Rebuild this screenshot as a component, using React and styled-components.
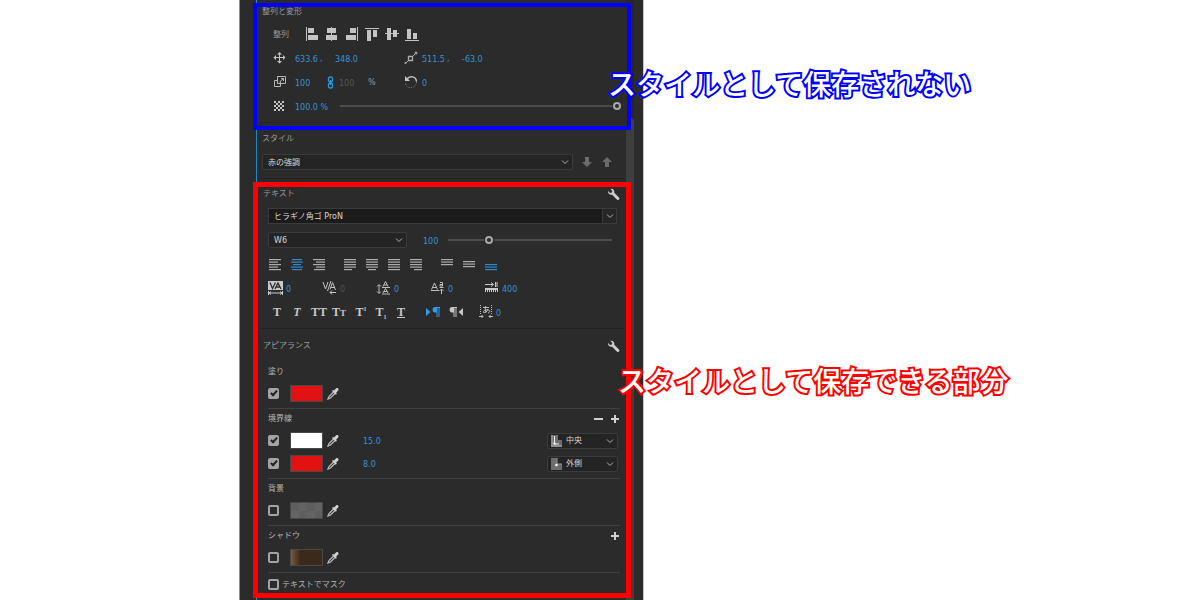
import styled, { createGlobalStyle, css } from "styled-components";

const ALIGN_ICONS = [
  { label: "左揃え", d: "M1 0h1v14H1zM3 1h6v5H3zM3 8h10v5H3z" },
  { label: "水平中央", d: "M6 0h1v14H6zM2 1h9v5H2zM1 8h11v5H1z" },
  { label: "右揃え", d: "M12 0h1v14h-1zM5 1h6v5H5zM1 8h10v5H1z" },
  { label: "上揃え", d: "M0 1h14v1H0zM2 3h4v11H2zM8 3h4v7H8z" },
  { label: "垂直中央", d: "M0 6h14v1H0zM2 1h4v12H2zM8 3h4v7H8z" },
  { label: "下揃え", d: "M0 13h14v1H0zM2 2h4v10H2zM8 6h4v6H8z" },
];

// each entry is [x, width] for the five lines of a paragraph icon
const FULL = [0, 12];
const PARAGRAPH_GROUPS = [
  [
    { label: "左揃え", lines: [FULL, [0, 9], FULL, [0, 9], FULL] },
    { label: "中央揃え", active: true, lines: [[1, 10], FULL, [2, 8], FULL, [1, 10]] },
    { label: "右揃え", lines: [FULL, [3, 9], FULL, [3, 9], [1, 11]] },
  ],
  [
    { label: "均等配置 左", lines: [FULL, FULL, FULL, FULL, [0, 8]] },
    { label: "均等配置 中央", lines: [FULL, FULL, FULL, FULL, [2, 8]] },
    { label: "両端揃え", lines: [FULL, FULL, FULL, FULL, FULL] },
    { label: "均等配置 右", lines: [FULL, FULL, FULL, FULL, [4, 8]] },
  ],
  [
    { label: "テキストを上揃え", lines: [FULL, FULL, FULL] },
    { label: "テキストを垂直中央", offset: 2, lines: [FULL, FULL, FULL] },
    { label: "テキストを下揃え", offset: 5, active: true, lines: [FULL, FULL, FULL] },
  ],
];

const STROKES = [
  { color: "#fff", width: "15.0", position: "中央" },
  { color: "#e31212", width: "8.0", position: "外側" },
];

export default function App() {
  return (
    <Page>
      <GlobalStyle />
      <Panel>
        <Main>
          <TransformSection />
          <StyleSection />
          <TextSection />
        </Main>
        <Track>
          <Thumb />
        </Track>
      </Panel>
    </Page>
  );
}

function TransformSection() {
  return (
    <Frame $color="#0000ff" $width={4}>
      <TransformTitle>整列と変形</TransformTitle>
      <AlignRow>
        <AlignLabel>整列</AlignLabel>
        {ALIGN_ICONS.map(({ label, d }) => (
          <IconButton key={label} aria-label={label}>
            <svg width="14" height="14" viewBox="0 0 14 14" fill="currentColor">
              <path d={d} />
            </svg>
          </IconButton>
        ))}
      </AlignRow>
      <Row $columns="22px 40px 69px 18px 40px 1fr">
        <MoveIcon />
        <Pair>
          <Value aria-label="位置 X" defaultValue="633.6" />
          <Comma>,</Comma>
        </Pair>
        <Value aria-label="位置 Y" defaultValue="348.0" />
        <AnchorIcon />
        <Pair>
          <Value aria-label="アンカー X" defaultValue="511.5" />
          <Comma>,</Comma>
        </Pair>
        <Value aria-label="アンカー Y" defaultValue="-63.0" />
      </Row>
      <Row $columns="22px 32px 12px 29px 36px 18px 1fr">
        <ScaleIcon />
        <Value aria-label="スケール" defaultValue="100" />
        <LinkIcon />
        <Value aria-label="スケール（横）" defaultValue="100" disabled />
        <Unit>%</Unit>
        <RotateIcon />
        <Value aria-label="回転" defaultValue="0" />
      </Row>
      <Row $columns="22px 45px 1fr">
        <OpacityIcon />
        <Value aria-label="不透明度" defaultValue="100.0 %" $wide />
        <Slider type="range" aria-label="不透明度スライダー" defaultValue={100} />
      </Row>
      <Divider />
      <Note $color="#0000ff" $top={56} $overlap={19}>
        スタイルとして保存されない
      </Note>
    </Frame>
  );
}

function StyleSection() {
  return (
    <StyleBlock>
      <Title as="label" htmlFor="style">
        スタイル
      </Title>
      <StyleRow>
        <Dropdown id="style" options={["赤の強調"]} />
        <ArrowButton aria-label="スタイルを取り込む">
          <svg width="10" height="12" viewBox="0 0 10 12" fill="currentColor">
            <path d="M3 1h4v5h3l-5 5-5-5h3z" />
          </svg>
        </ArrowButton>
        <ArrowButton aria-label="スタイルに適用">
          <svg width="10" height="12" viewBox="0 0 10 12" fill="currentColor">
            <path d="M3 11h4V6h3L5 1 0 6h3z" />
          </svg>
        </ArrowButton>
      </StyleRow>
      <Divider />
    </StyleBlock>
  );
}

function TextSection() {
  return (
    <Frame $color="#ff0000" $width={5}>
      <Header>
        <Title>テキスト</Title>
        <WrenchButton />
      </Header>
      <FontRow>
        <Dropdown label="フォント" options={["ヒラギノ角ゴ ProN"]} split />
      </FontRow>
      <WeightRow>
        <WeightBox>
          <Dropdown label="フォントスタイル" options={["W6"]} />
        </WeightBox>
        <Value aria-label="フォントサイズ" defaultValue="100" />
        <Slider type="range" aria-label="サイズスライダー" max={427} defaultValue={100} />
      </WeightRow>
      <ParagraphRow>
        {PARAGRAPH_GROUPS.map((group, i) => (
          <ParagraphGroup key={i}>
            {group.map((icon) => (
              <IconButton key={icon.label} aria-label={icon.label} $active={icon.active}>
                <LinesIcon {...icon} />
              </IconButton>
            ))}
          </ParagraphGroup>
        ))}
      </ParagraphRow>
      <MetricsRow>
        <Metric label="トラッキング" value="0" icon={<TrackingIcon />} />
        <Metric label="カーニング" value="0" icon={<KerningIcon />} disabled />
        <Metric label="行間" value="0" icon={<LeadingIcon />} />
        <Metric label="ベースラインシフト" value="0" icon={<BaselineIcon />} />
        <Metric label="タブの幅" value="400" icon={<TabIcon />} />
      </MetricsRow>
      <GlyphRow>
        <GlyphGroup>
          <Glyph aria-label="太字">T</Glyph>
          <Glyph aria-label="斜体"><i>T</i></Glyph>
        </GlyphGroup>
        <GlyphGroup>
          <Glyph aria-label="オールキャップス">TT</Glyph>
          <Glyph aria-label="スモールキャップス">T<small>T</small></Glyph>
        </GlyphGroup>
        <GlyphGroup>
          <Glyph aria-label="上付き文字">T<sup>1</sup></Glyph>
          <Glyph aria-label="下付き文字">T<sub>1</sub></Glyph>
          <Glyph aria-label="下線"><u>T</u></Glyph>
        </GlyphGroup>
        <DirectionGroup>
          <IconButton aria-label="左から右" $active>
            <PilcrowIcon />
          </IconButton>
          <IconButton aria-label="右から左">
            <PilcrowIcon reverse />
          </IconButton>
        </DirectionGroup>
        <Metric label="文字ツメ" value="0" icon={<TsumeIcon />} />
      </GlyphRow>
      <Divider />

      <AppearanceHeader>
        <Title>アピアランス</Title>
        <WrenchButton />
      </AppearanceHeader>
      <Group>
        <GroupHeader>塗り</GroupHeader>
        <PaintRow name="塗り" fill="#e31212" checked />
      </Group>
      <Group>
        <GroupHeader>
          境界線
          <Actions>
            <SignButton label="境界線を削除" d="M1 4h9v2H1z" />
            <SignButton label="境界線を追加" d="M5 1h2v3h3v2H7v3H5V6H2V4h3z" />
          </Actions>
        </GroupHeader>
        {STROKES.map(({ color, width, position }) => (
          <PaintRow key={position} name={`境界線 ${position}`} fill={color} checked>
            <Value aria-label={`${position} 線幅`} defaultValue={width} />
            <StrokeBox>
              <Dropdown
                label={`${position} の位置`}
                options={[position]}
                icon={<StrokeIcon outer={position === "外側"} />}
              />
            </StrokeBox>
          </PaintRow>
        ))}
      </Group>
      <Group>
        <GroupHeader>背景</GroupHeader>
        <PaintRow
          name="背景"
          fill="repeating-conic-gradient(#646464 0 25%, #5e5e5e 0 50%) 0 0 / 16px 16px"
        />
      </Group>
      <Group>
        <GroupHeader>
          シャドウ
          <Actions>
            <SignButton label="シャドウを追加" d="M5 1h2v3h3v2H7v3H5V6H2V4h3z" />
          </Actions>
        </GroupHeader>
        <PaintRow
          name="シャドウ"
          fill="linear-gradient(90deg, #7a5c40 0, #5f452e 12%, #3a2a1b 30%)"
        />
      </Group>
      <MaskLabel>
        <Check type="checkbox" />
        テキストでマスク
      </MaskLabel>
      <Note $color="#ff0000" $top={173} $overlap={8}>
        スタイルとして保存できる部分
      </Note>
    </Frame>
  );
}

function Dropdown({ id, label, options, split, icon }) {
  return (
    <SelectBox $split={split}>
      <Select id={id} aria-label={label} $icon={Boolean(icon)}>
        {options.map((option) => (
          <option key={option}>{option}</option>
        ))}
      </Select>
      {icon && <SelectIcon>{icon}</SelectIcon>}
      <Chevron $split={split}>
        <svg width="8" height="6" viewBox="0 0 8 6" fill="none" stroke="#b0b0b0">
          <path d="M1 1.5l3 3 3-3" />
        </svg>
      </Chevron>
    </SelectBox>
  );
}

function Metric({ label, value, icon, disabled }) {
  return (
    <MetricLabel>
      {icon}
      <Value aria-label={label} defaultValue={value} disabled={disabled} />
    </MetricLabel>
  );
}

function PaintRow({ name, fill, checked, children }) {
  return (
    <Paint>
      <Check type="checkbox" aria-label={name} defaultChecked={checked} />
      <Swatch aria-label={`${name} カラー`} $fill={fill} />
      <IconButton aria-label={`${name} スポイト`}>
        <svg width="12" height="13" viewBox="0 0 12 13">
          <path d="M7 4.5L2 9.500 1 12l2.500-1L8.500 6" fill="none" stroke="#b8b8b8" strokeWidth="1.300" />
          <path d="M5 4l1-1 1 .6L9 1.400C10.500.3 12.300 2 11.200 3.600L9.200 5.600l.6 1.200-1 1z" fill="#d0d0d0" />
        </svg>
      </IconButton>
      {children}
    </Paint>
  );
}

function SignButton({ label, d }) {
  return (
    <IconButton aria-label={label}>
      <svg width="11" height="11" viewBox="0 0 11 11" fill="#d0d0d0">
        <path d={d} />
      </svg>
    </IconButton>
  );
}

function WrenchButton() {
  return (
    <IconButton aria-label="設定">
      <svg width="13" height="13" viewBox="0 0 13 13" fill="#cfcfcf">
        <path d="M3.200.8C5.500.2 7.800 2 7.200 4.700l5 5c1 1.300-.8 3-2.100 2l-5-5C2.700 7.300.6 5.300 1 3l2.200 1.900 1.700-.4.4-1.500z" />
      </svg>
    </IconButton>
  );
}

function LinesIcon({ lines, offset = 0 }) {
  return (
    <svg width="12" height="13" viewBox="0 0 12 13" fill="currentColor" opacity=".85">
      {lines.map(([x, width], i) => (
        <rect key={i} x={x} y={1 + offset + i * 2.5} width={width} height="1.200" />
      ))}
    </svg>
  );
}

function MoveIcon() {
  return (
    <svg width="14" height="14" viewBox="0 0 14 14" fill="none" stroke="#c4c4c4">
      <path d="M6.500 2v10M2 6.500h10" />
      <path d="M6.500 1l2.500 2.500H4zM6.500 12.500L9 10H4zM.5 6.500L3 4v5zM12.500 6.500L10 4v5z" fill="#c4c4c4" stroke="none" />
    </svg>
  );
}

function AnchorIcon() {
  return (
    <svg width="14" height="14" viewBox="0 0 14 14" fill="none" stroke="#aaa">
      <path d="M4.500 5.500h4v4h-4z" strokeWidth="1.300" />
      <path d="M1.500 12.500l3-3M8.500 5.500l3-3" />
      <circle cx="1.500" cy="12" r="1" fill="#aaa" stroke="none" />
      <circle cx="12" cy="2" r="1" fill="#aaa" />
    </svg>
  );
}

function ScaleIcon() {
  return (
    <svg width="14" height="14" viewBox="0 0 14 14" fill="none" stroke="#b5b5b5">
      <path d="M4.500 1.500h8v7h-8zM4 5.500H1.500v6h6V9M6.500 7l4-3.500M8 3.500h2.500V6M4.500 8.500h3v-2" />
    </svg>
  );
}

function LinkIcon() {
  return (
    <svg width="7" height="13" viewBox="0 0 7 13" fill="none" stroke="#2f93d6" strokeWidth="1.400">
      <rect x="1.500" y="1" width="4" height="5" rx="1.800" />
      <rect x="1.500" y="7" width="4" height="5" rx="1.800" />
      <path d="M3.500 4v5" />
    </svg>
  );
}

function RotateIcon() {
  return (
    <svg width="14" height="14" viewBox="0 0 14 14" fill="none" stroke="#c4c4c4">
      <path d="M3 4c3-4 9-2.500 9.500 2.500" strokeWidth="1.500" />
      <path d="M12.500 7c0 4-4 6.500-7.500 5.500-2-.7-3.200-2-3.500-4" strokeDasharray="1 1.500" stroke="#858585" />
      <path d="M1 1v5h5z" fill="#c4c4c4" stroke="none" />
    </svg>
  );
}

function OpacityIcon() {
  return (
    <svg width="14" height="12" viewBox="0 0 14 12" fill="#c4c4c4">
      {[0, 1, 2, 3, 4].map((y) =>
        [0, 1, 2].map((x) => (
          <rect key={`${x}${y}`} x={1 + x * 4 + (y % 2) * 2} y={1 + y * 2} width={x === 2 && y % 2 ? 0 : 2} height="2" />
        ))
      )}
    </svg>
  );
}

function TrackingIcon() {
  return (
    <svg width="16" height="16" viewBox="0 0 16 16" fill="none" stroke="#c9c9c9">
      <path d="M0 1h15v9H0z" fill="#c9c9c9" stroke="none" />
      <path d="M2 2.500l2.500 6 3-6M7 9l3-6 3 6M8.500 7h3.500" stroke="#2b2b2b" strokeWidth="1.300" />
      <path d="M1 13h13M3 11.500L1 13l2 1.500M12 11.500l2 1.500-2 1.500M.5 11v4M14.500 11v4" />
    </svg>
  );
}

function KerningIcon() {
  return (
    <svg width="16" height="16" viewBox="0 0 16 16" fill="none" stroke="#c4c4c4">
      <path d="M1 2l2.500 7L6 2M9 1L5.500 11M8 9.500l2.500-7 3 7.500M9 7.500h4" />
      <path d="M14 12.500H8M10 10.500l-2 2 2 2" />
    </svg>
  );
}

function LeadingIcon() {
  return (
    <svg width="16" height="16" viewBox="0 0 16 16" fill="none" stroke="#bdbdbd">
      <path d="M7 6.500l2.500-5 2.500 5M8 5h3M6 7.500h8M7 13l2.500-4.500L12 13M8 11.500h3.500M6 14h8" />
      <path d="M3 5v8M1 6.500l2-2 2 2M1 11.500l2 2 2-2" />
    </svg>
  );
}

function BaselineIcon() {
  return (
    <svg width="16" height="16" viewBox="0 0 16 16" fill="none" stroke="#bdbdbd">
      <path d="M1.500 9.500L4.500 3l3 6.500M3 7.500h3.500M1 10.500h8" />
      <path d="M10 2.500h2.500v3.500H10V4.500h2.500M9.500 7.500h4M11.500 14V9.500M9.500 11l2-2 2 2" />
    </svg>
  );
}

function TabIcon() {
  return (
    <svg width="16" height="16" viewBox="0 0 16 16" fill="none" stroke="#c9c9c9">
      <path d="M1 4.500h8M7 2.500l2.500 2-2.500 2M11.500 2v5M13 2v5" />
      <path d="M1.500 12V9.500h12V12M3.500 9v3M5.500 9v3M7.500 9v3M9.500 9v3M11.500 9v3" />
      <path d="M1 9h13" strokeWidth="2" />
    </svg>
  );
}

function PilcrowIcon({ reverse }) {
  return (
    <svg width="14" height="12" viewBox="0 0 14 12" fill="currentColor">
      {reverse ? <path d="M14 2v8L9.500 6z" /> : <path d="M0 2v8l4.500-4z" />}
      <path
        transform={reverse ? undefined : "translate(6)"}
        d="M3 1h5v1H7.500v9h-1V2h-1v9h-1V6.500H3C-.2 6.500-.2 1 3 1z"
      />
    </svg>
  );
}

function TsumeIcon() {
  return (
    <svg width="16" height="14" viewBox="0 0 16 14" fill="none" stroke="#bdbdbd">
      <path d="M2.500 0v9M13.500 0v9" strokeDasharray="1 1" />
      <path d="M5 2.500h6M7.500 1c-.5 3 0 5 .5 6.500M10 4c-1 3-3 4-4.500 3.500-1-1.500 2.500-3 4.500-2.500 2.500.5 2 2.500 0 3" />
      <path d="M1 11.500h4M3.500 10L5 11.500 3.500 13M15 11.500h-4M12.500 10L11 11.500l1.500 1.500" />
    </svg>
  );
}

function StrokeIcon({ outer }) {
  return (
    <svg width="11" height="12" viewBox="0 0 11 12">
      <path d={outer ? "M0 0h6v6h5v6H0z" : "M0 0h7v5h4v7H0z"} fill="#6d6d6d" />
      {!outer && <path d="M0 0h2v10h9v2H0z" fill="#8e8e8e" />}
      <path d={outer ? "M6 0v6h5" : "M3.500 1v8H8"} fill="none" stroke={outer ? "#909090" : "#efefef"} />
      <circle cx={outer ? 5.5 : 3.5} cy={outer ? 7 : 8.5} r="1.300" fill="#fff" />
    </svg>
  );
}

const GlobalStyle = createGlobalStyle`
  * {
    box-sizing: border-box;
  }

  body {
    margin: 0;
    background: #fff;
  }

  button, input, select {
    font: inherit;
    color: inherit;
    margin: 0;
    padding: 0;
    border: 0;
    background: none;
  }
`;

const Page = styled.main`
  min-height: 100vh;
  display: flex;
  padding-left: calc(20% - 1px);
  font-family: "DejaVu Sans", "Noto Sans CJK JP", sans-serif;
  font-size: 8px;
  line-height: 12px;
  color: #b4b4b4;
`;

const Panel = styled.div`
  display: flex;
  width: 100%;
  max-width: 405px;
  padding: 0 9px 0 13px;
  border-left: 1px solid #8c8c8c;
  border-right: 1px solid #c8c8c8;
  background: #2b2b2b;
`;

const Main = styled.div`
  position: relative;
  z-index: 1;
  flex: 1;
  padding-top: 3px;
  background: linear-gradient(#2786c4, #2786c4) 3px 0 / 1px 100% no-repeat;
`;

const Track = styled.div`
  width: 8px;
  margin-left: -5px;
  padding-top: 118px;
  display: flex;
  background: #262626;
`;

const Thumb = styled.div`
  flex: 1;
  border-radius: 4px 4px 0 0;
  background: #3e3e3e;
`;

const Frame = styled.section`
  position: relative;
  border: ${({ $width, $color }) => `${$width}px solid ${$color}`};
  background: #2b2b2b;
`;

const StyleBlock = styled.section`
  padding: 3px 5px 0 4px;
`;

const Title = styled.h2`
  display: block;
  margin: 0;
  padding-left: 5px;
  font-size: 8px;
  font-weight: 400;
  line-height: 12px;
  color: #999;
`;

const TransformTitle = styled(Title)`
  margin-bottom: 5px;
  line-height: 10px;
`;

const Divider = styled.hr`
  height: 1px;
  margin: 4px 2px 3px;
  border: 0;
  background: #222;
`;

const Row = styled.div`
  display: grid;
  grid-template-columns: ${({ $columns }) => $columns};
  align-items: center;
  height: 24px;
  padding: 0 6px 0 16px;
`;

const AlignRow = styled.div`
  display: flex;
  align-items: center;
  gap: 6px;
  height: 24px;
  padding-left: 16px;
`;

const AlignLabel = styled.span`
  width: 26px;
  padding-top: 2px;
  color: #999;
`;

const Pair = styled.span`
  display: flex;
  align-items: center;
`;

const Comma = styled.span`
  padding-top: 2px;
  color: #3492d6;
`;

const Value = styled.input`
  width: ${({ $wide }) => ($wide ? "40px" : "25px")};
  height: 14px;
  padding-top: 2px;
  color: #3492d6;

  &:disabled {
    color: #555;
  }
`;

const Unit = styled.span`
  padding-top: 2px;
  color: #999;
`;

const IconButton = styled.button`
  display: flex;
  align-items: center;
  justify-content: center;
  color: ${({ $active }) => ($active ? "#2f9be6" : "#c4c4c4")};
  cursor: pointer;

  &:hover {
    filter: brightness(1.2);
  }
`;

const ArrowButton = styled(IconButton)`
  color: #6b6b6b;
`;

const Slider = styled.input`
  appearance: none;
  width: 100%;
  height: 10px;

  &::-webkit-slider-runnable-track {
    height: 2px;
    background: #4c4c4c;
  }

  &::-webkit-slider-thumb {
    appearance: none;
    width: 8px;
    height: 8px;
    margin-top: -3px;
    border: 2px solid #a9a9a9;
    border-radius: 50%;
    background: #2b2b2b;
    box-shadow: 0 0 0 1px #2b2b2b;
  }
`;

const StyleRow = styled.div`
  display: grid;
  grid-template-columns: 1fr 12px 12px;
  gap: 8px;
  align-items: center;
  margin-top: 9px;
  padding: 0 13px 8px 5px;

  & + ${Divider} {
    margin-top: 0;
  }
`;

const SelectBox = styled.div`
  display: grid;
  grid-template-columns: 1fr 14px;
  align-items: center;
  height: 16px;
  border: 1px solid #3b3b3b;
  border-radius: ${({ $split }) => ($split ? "0" : "2px")};
  background: ${({ $split }) => ($split ? "#1b1b1b" : "#242424")};
`;

const Select = styled.select`
  grid-area: 1 / 1 / 2 / 3;
  appearance: none;
  width: 100%;
  height: 14px;
  padding-top: 1px;
  padding-left: ${({ $icon }) => ($icon ? "18px" : "5px")};
  color: #d6d6d6;
`;

const SelectIcon = styled.span`
  grid-area: 1 / 1;
  display: flex;
  padding-left: 3px;
  pointer-events: none;
`;

const Chevron = styled.span`
  grid-area: 1 / 2;
  display: flex;
  align-items: center;
  justify-content: center;
  height: 14px;
  pointer-events: none;

  ${({ $split }) =>
    $split &&
    css`
      border-left: 1px solid #3b3b3b;
      background: #262626;
    `}
`;

const Header = styled.div`
  display: flex;
  align-items: center;
  justify-content: space-between;
  height: 14px;
  margin-bottom: 3px;
  padding-right: 6px;
`;

const AppearanceHeader = styled(Header)`
  margin: 9px 0 8px;
  height: 16px;
`;

const FontRow = styled.div`
  padding: 4px 9px 4px 10px;
`;

const WeightRow = styled.div`
  display: grid;
  grid-template-columns: 155px 25px 1fr;
  align-items: center;
  height: 24px;
  padding: 0 14px 0 10px;
`;

const WeightBox = styled.div`
  margin-right: 16px;
`;

const ParagraphRow = styled.div`
  display: flex;
  align-items: center;
  gap: 19px;
  height: 24px;
  padding-left: 11px;
`;

const ParagraphGroup = styled.div`
  display: flex;
  gap: 10px;
`;

const MetricsRow = styled.div`
  display: grid;
  grid-template-columns: repeat(5, 54px);
  align-items: center;
  height: 24px;
  padding-left: 10px;
`;

const MetricLabel = styled.label`
  display: flex;
  align-items: center;
  gap: 2px;
`;

const GlyphRow = styled.div`
  display: flex;
  align-items: center;
  gap: 2px;
  height: 24px;
  padding-left: 9px;
`;

const GlyphGroup = styled.div`
  display: flex;
`;

const Glyph = styled.button`
  width: 20px;
  height: 16px;
  font-family: "Liberation Serif", serif;
  font-size: 12px;
  font-weight: 700;
  line-height: 16px;
  color: #c8c8c8;
  white-space: nowrap;

  small {
    font-size: 9px;
  }

  sup, sub {
    font-size: 6px;
    line-height: 0;
  }
`;

const DirectionGroup = styled.div`
  display: flex;
  gap: 9px;
  margin: 0 13px;
`;

const Group = styled.div`
  margin: 0 6px 0 10px;
  padding-bottom: 3px;
  border-bottom: 1px solid #414141;
`;

const GroupHeader = styled.div`
  display: flex;
  align-items: center;
  justify-content: space-between;
  height: 20px;
`;

const Actions = styled.div`
  display: flex;
  gap: 5px;
`;

const Paint = styled.div`
  display: grid;
  grid-template-columns: 22px 37px 36px 1fr auto;
  align-items: center;
  justify-items: start;
  height: 23px;
  padding-right: 2px;
`;

const Check = styled.input`
  appearance: none;
  width: 11px;
  height: 11px;
  border: 2px solid #a3a3a3;
  border-radius: 2px;

  &:checked {
    background: #a3a3a3;
  }

  &:checked::before {
    content: "";
    display: block;
    width: 2px;
    height: 5px;
    margin: -1px 0 0 2px;
    border: solid #222;
    border-width: 0 2px 2px 0;
    transform: rotate(42deg);
  }
`;

const Swatch = styled.button`
  width: 33px;
  height: 17px;
  border: 1px solid #484848;
  background: ${({ $fill }) => $fill};
`;

const StrokeBox = styled.div`
  width: 71px;
`;

const MaskLabel = styled.label`
  display: flex;
  align-items: center;
  gap: 3px;
  height: 20px;
  padding: 3px 0 0 10px;
`;

const Note = styled.p`
  position: absolute;
  top: ${({ $top }) => $top}px;
  left: calc(100% - ${({ $overlap }) => $overlap}px);
  margin: 0;
  font-family: "Noto Sans CJK JP", sans-serif;
  font-size: 28px;
  font-weight: 500;
  line-height: 40px;
  white-space: nowrap;
  color: #fff;
  -webkit-text-stroke: 4px ${({ $color }) => $color};
  paint-order: stroke fill;
`;
